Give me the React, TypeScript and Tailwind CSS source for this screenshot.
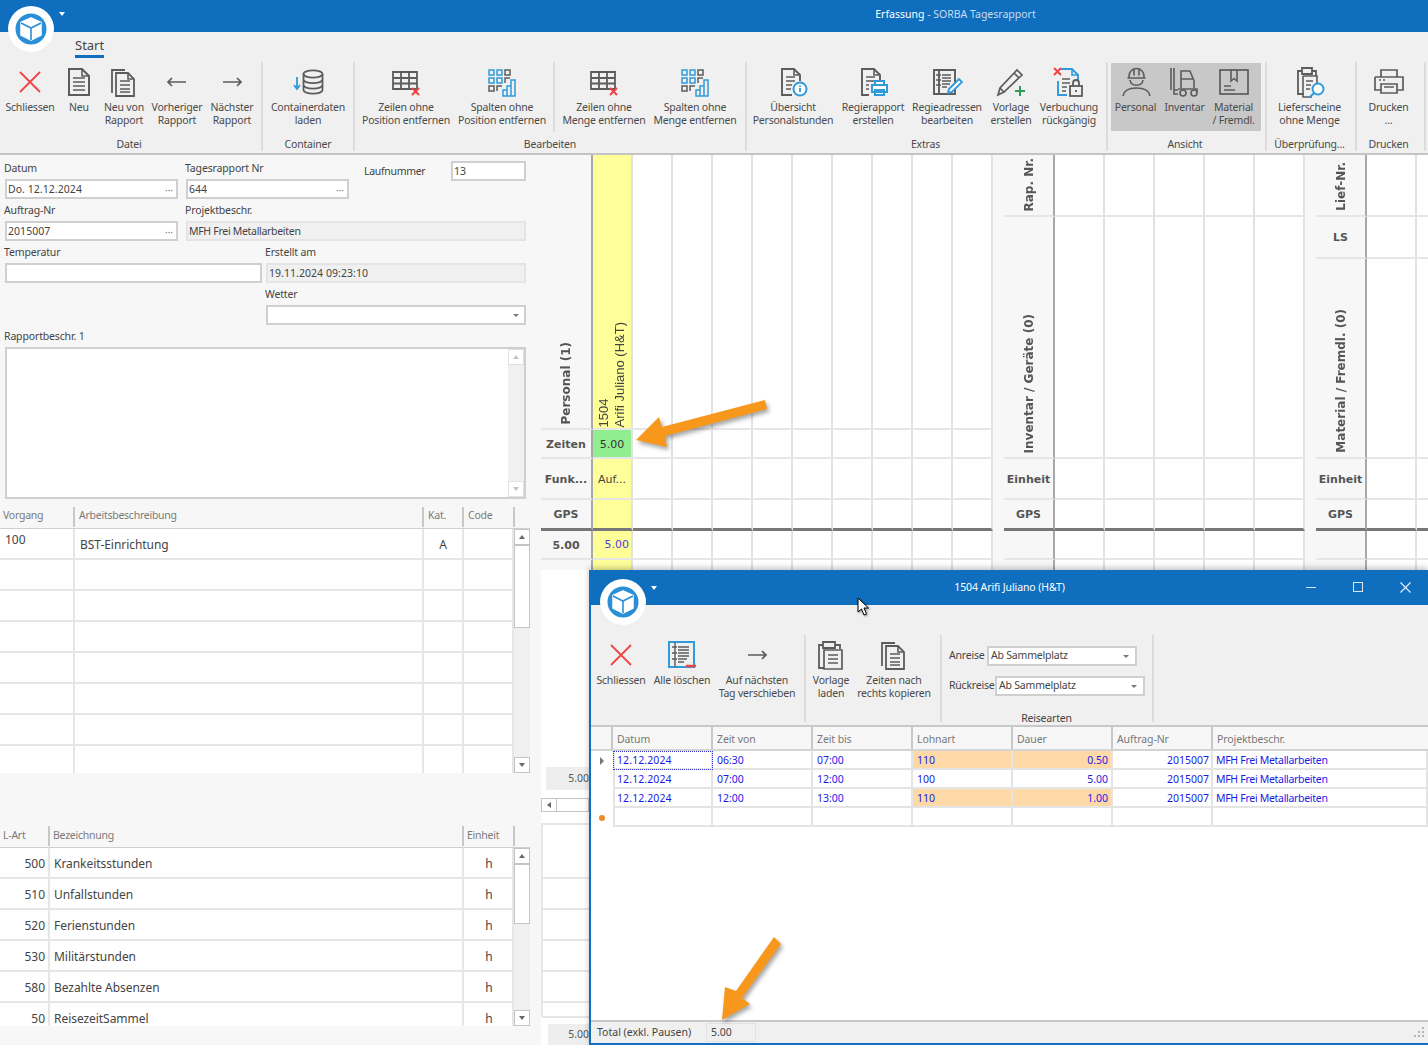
import React from "react";

const S = "#5c5c5c", B = "#2f9bdc", R = "#ee4444";

function Ic({ children }: { children: React.ReactNode }) {
  return (
    <svg width="32" height="32" viewBox="0 0 32 32" fill="none" stroke={S} strokeWidth="1.6">
      {children}
    </svg>
  );
}
const Doc = ({ lines = true }: { lines?: boolean }) => (
  <>
    <path d="M6 3h13l7 7v19H6z" strokeWidth="2" />
    <path d="M19 3v7h7" />
    {lines && <path d="M10 12h12M10 16h12M10 20h12M10 24h12" />}
  </>
);
const XIcon = () => <Ic><path d="M6 6l20 20M26 6L6 26" stroke={R} strokeWidth="1.8" /></Ic>;
const DocIcon = () => <Ic><Doc /></Ic>;
const DocStack = () => (
  <Ic>
    <path d="M4 27V4h13" strokeWidth="1.8" />
    <path d="M8 7h12l6 6v17H8z" strokeWidth="1.8" />
    <path d="M20 7v6h6M12 15h10M12 19h10M12 23h10M12 26h10" />
  </Ic>
);
const ArrowL = () => <Ic><path d="M7 16h18M11 12l-4 4 4 4" strokeWidth="1.7" /></Ic>;
const ArrowR = () => <Ic><path d="M7 16h18M21 12l4 4-4 4" strokeWidth="1.7" /></Ic>;
const Cylinder = () => (
  <Ic>
    <ellipse cx="21" cy="8" rx="9.5" ry="3.6" strokeWidth="1.8" />
    <path d="M11.5 8v16c0 2 4 3.6 9.5 3.6s9.5-1.6 9.5-3.6V8M11.5 13.5c0 2 4 3.6 9.5 3.6s9.5-1.6 9.5-3.6M11.5 19c0 2 4 3.6 9.5 3.6s9.5-1.6 9.5-3.6" strokeWidth="1.8" />
    <path d="M5 11v11M2 19l3 4 3-4" stroke={B} strokeWidth="1.8" />
  </Ic>
);
const TableX = () => (
  <Ic>
    <path d="M3 6h24v17H3zM3 12h24M3 17.500h24M11 6v17M19 6v17" strokeWidth="1.8" />
    <path d="M22 22l7 7M29 22l-7 7" stroke={R} strokeWidth="2" fill="white" />
  </Ic>
);
const ColsBars = () => (
  <Ic>
    <g stroke={B} strokeWidth="1.5">
      <rect x="3" y="4" width="5" height="5" /><rect x="11" y="4" width="5" height="5" />
      <rect x="3" y="12" width="5" height="5" /><rect x="11" y="12" width="5" height="5" />
    </g>
    <g strokeWidth="1.5">
      <rect x="19" y="4" width="5" height="5" /><path d="M19 17v-5h5" />
      <rect x="3" y="20" width="5" height="5" /><path d="M11 25v-5h5" />
    </g>
    <path d="M17 30v-6h4v6zM21 30V20h4v10zM25 30V14h4v16z" stroke={B} strokeWidth="1.5" />
  </Ic>
);
const DocInfo = () => (
  <Ic>
    <path d="M15 29H5V3h12l6 6v6" strokeWidth="1.9" /><path d="M17 3v6h6M9 11h9M9 15h9M9 19h6M9 23h5" />
    <circle cx="23" cy="23" r="6.500" stroke={B} strokeWidth="2" fill="white" />
    <path d="M23 22v4M23 19.500v1.500" stroke={B} strokeWidth="1.8" />
  </Ic>
);
const DocPrint = () => (
  <Ic>
    <path d="M12 29H5V3h12l6 6v5" strokeWidth="1.9" /><path d="M17 3v6h6M9 11h9M9 15h9M9 19h3M9 23h3" />
    <path d="M18 19v-4h9v4M15 19h15v7H15zM18 24h9v5h-9z" stroke={B} strokeWidth="2" fill="white" />
  </Ic>
);
const DocEdit = () => (
  <Ic>
    <path d="M3 4h21v24H3zM8 4v24" strokeWidth="1.9" />
    <path d="M11 9h9M11 12h9M11 15h9M11 18h8M11 21h5M5 9h5M5 14h5M5 19h5" />
    <path d="M17 27l1-4 10-10 3 3-10 10z" stroke={B} strokeWidth="1.9" fill="white" />
  </Ic>
);
const PencilPlus = () => (
  <Ic>
    <path d="M3 29l2-7L22 4l5 5-18 17zM5 22l4 4M19 7l5 5" strokeWidth="1.7" />
    <path d="M25 20v10M20 25h10" stroke="#2f9e55" strokeWidth="2" />
  </Ic>
);
const DocXLock = () => (
  <Ic>
    <path d="M8 3h11l6 6v5M5 15v14h9" stroke={B} strokeWidth="1.9" />
    <path d="M19 3v6h6" stroke={B} />
    <path d="M1 2l7 7M8 2L1 9" stroke={R} strokeWidth="2" />
    <path d="M9 13h8M9 17h8M9 21h5M9 25h4" />
    <rect x="17" y="20" width="12" height="10" strokeWidth="1.8" />
    <path d="M20 20v-3a3 3 0 016 0v3M23 24v2" strokeWidth="1.8" />
  </Ic>
);
const Worker = () => (
  <Ic>
    <path d="M9 10a7.500 7.500 0 0115 0v2H9zM7.500 12h18M14 3.500v6M19 3.500v6M10 14c1 7 12 7 13 0" strokeWidth="1.6" />
    <path d="M3 30c1-6 6-8 13.500-8s12.500 2 13.500 8" strokeWidth="1.6" />
  </Ic>
);
const Forklift = () => (
  <Ic>
    <path d="M5 2v26h4M2 2v22M5 24h4" strokeWidth="1.6" />
    <path d="M12 22V5h9l4 10v7M12 13h13" strokeWidth="1.6" />
    <path d="M9 23h19v3" strokeWidth="1.6" />
    <circle cx="14" cy="27" r="3" strokeWidth="1.6" /><circle cx="25" cy="27" r="3" strokeWidth="1.6" />
  </Ic>
);
const BoxIc = () => (
  <Ic>
    <rect x="2" y="4" width="28" height="24" strokeWidth="1.7" />
    <path d="M13 4v11l3-2.500 3 2.500V4M6 20h7M6 24h11" strokeWidth="1.6" />
  </Ic>
);
const ClipSearch = () => (
  <Ic>
    <path d="M8 5H4v23h6" strokeWidth="1.8" /><path d="M8 2h10v6H8zM18 5h4v5" strokeWidth="1.8" />
    <path d="M9 10h14v10M9 10v21h9M12 15h7M12 19h5M12 23h4" strokeWidth="1.6" />
    <circle cx="24" cy="23" r="5.500" stroke={B} strokeWidth="2" fill="white" />
    <path d="M20 27l-4 4" stroke={B} strokeWidth="2" />
  </Ic>
);
const Printer = () => (
  <Ic>
    <path d="M8 11V4h16v7M2 11h28v13h-6M8 24H2V11M8 18h16v9H8zM11 21h10M6 14h2M10 14h2" strokeWidth="1.7" />
  </Ic>
);
const ClipDoc = () => (
  <Ic>
    <path d="M8 6H4v23h5M8 3h12v6H8zM20 6h5v4" strokeWidth="1.8" />
    <path d="M9 11h18v19H9zM13 16h10M13 20h10M13 24h10" strokeWidth="1.7" />
  </Ic>
);
const ClearAll = () => (
  <Ic>
    <rect x="3" y="3" width="25" height="25" stroke={B} strokeWidth="2" />
    <path d="M9 3v25M12 8h11M12 11h11M12 14h11M12 17h11M12 20h9M12 23h6M6 8h5M6 14h5M6 20h5" strokeWidth="1.4" />
    <path d="M20 27h10" stroke={R} strokeWidth="2.500" />
  </Ic>
);

const Logo = () => (
  <div className="flex h-[46px] w-[46px] items-center justify-center rounded-full bg-white">
    <svg width="32" height="32" viewBox="0 0 32 32">
      <circle cx="16" cy="16" r="15.500" fill="#2b8fd8" />
      <path d="M16 5l10 4.500v12.500l-10 5-10-5V9.500z" fill="white" stroke="white" strokeWidth="1.5" strokeLinejoin="round" />
      <path d="M6 10l10 5 10-5M16 15v12" fill="none" stroke="#2b8fd8" strokeWidth="1.6" />
    </svg>
  </div>
);
const Caret = ({ className }: { className: string }) => (
  <div className={`h-0 w-0 border-x-[3.500px] border-t-[4px] border-x-transparent border-t-white ${className}`} />
);

function Btn({ w, icon, t1, t2 }: { w: string; icon: React.ReactNode; t1: string; t2?: string }) {
  return (
    <div className={`flex shrink-0 flex-col items-center ${w}`}>
      <div className="flex h-[39px] items-center justify-center">{icon}</div>
      <div className="whitespace-nowrap text-center text-[10.5px] leading-[13px] tracking-[-0.2px] text-[#4a4a4a]">
        <div>{t1}</div>
        {t2 && <div>{t2}</div>}
      </div>
    </div>
  );
}
function Group({ w, label, pad, children }: { w: string; label: string; pad?: string; children: React.ReactNode }) {
  return (
    <div className={`flex h-[89px] shrink-0 flex-col border-r-2 border-[#dcdcdc] ${w} ${pad ?? ""}`}>
      <div className="flex h-[76px]">{children}</div>
      <div className="whitespace-nowrap pt-[2px] text-center text-[10.5px] leading-[13px] tracking-[-0.2px] text-[#4a4a4a]">{label}</div>
    </div>
  );
}
const Vsep = () => <div className="mx-[3px] h-[70px] w-[2px] shrink-0 bg-[#dcdcdc]" />;

function Ribbon() {
  return (
    <div className="flex h-[123px] flex-col border-b-2 border-[#c4c4c4] bg-[#f0f0f0]">
      <div className="flex h-[30px] pl-[75px] pt-[5px]">
        <div className="h-[21px] border-b-[3px] border-[#106ebe] text-[13px] leading-[16px] text-[#444]">Start</div>
      </div>
      <div className="flex">
        <Group w="w-[263px]" label="Datei" pad="pl-px pr-[4px]">
          <Btn w="w-[58px]" icon={<XIcon />} t1="Schliessen" />
          <Btn w="w-[40px]" icon={<DocIcon />} t1="Neu" />
          <Btn w="w-[50px]" icon={<DocStack />} t1="Neu von" t2="Rapport" />
          <Btn w="w-[56px]" icon={<ArrowL />} t1="Vorheriger" t2="Rapport" />
          <Btn w="w-[54px]" icon={<ArrowR />} t1="Nächster" t2="Rapport" />
        </Group>
        <Group w="w-[92px]" label="Container">
          <Btn w="w-[90px]" icon={<Cylinder />} t1="Containerdaten" t2="laden" />
        </Group>
        <Group w="w-[392px]" label="Bearbeiten" pad="pl-[3px] pr-[3px]">
          <Btn w="w-[96px]" icon={<TableX />} t1="Zeilen ohne" t2="Position entfernen" />
          <Btn w="w-[96px]" icon={<ColsBars />} t1="Spalten ohne" t2="Position entfernen" />
          <Vsep />
          <Btn w="w-[92px]" icon={<TableX />} t1="Zeilen ohne" t2="Menge entfernen" />
          <Btn w="w-[90px]" icon={<ColsBars />} t1="Spalten ohne" t2="Menge entfernen" />
        </Group>
        <Group w="w-[361px]" label="Extras" pad="pl-px pr-[3px]">
          <Btn w="w-[90px]" icon={<DocInfo />} t1="Übersicht" t2="Personalstunden" />
          <Btn w="w-[70px]" icon={<DocPrint />} t1="Regierapport" t2="erstellen" />
          <Btn w="w-[78px]" icon={<DocEdit />} t1="Regieadressen" t2="bearbeiten" />
          <Btn w="w-[50px]" icon={<PencilPlus />} t1="Vorlage" t2="erstellen" />
          <Btn w="w-[66px]" icon={<DocXLock />} t1="Verbuchung" t2="rückgängig" />
        </Group>
        <Group w="w-[159px]" label="Ansicht" pad="pl-[3px] pr-[6px]">
          <div className="mt-px flex h-[68px] w-[150px] shrink-0 bg-[#c8c8c8]">
            <div className="-mt-px flex">
              <Btn w="w-[49px]" icon={<Worker />} t1="Personal" />
              <Btn w="w-[49px]" icon={<Forklift />} t1="Inventar" />
              <Btn w="w-[49px]" icon={<BoxIc />} t1="Material" t2="/ Fremdl." />
            </div>
          </div>
        </Group>
        <Group w="w-[90px]" label="Überprüfung..." pad="pr-[3px]">
          <Btn w="w-[85px]" icon={<ClipSearch />} t1="Lieferscheine" t2="ohne Menge" />
        </Group>
        <Group w="w-[69px]" label="Drucken" pad="pr-[4px]">
          <Btn w="w-[63px]" icon={<Printer />} t1="Drucken" t2="..." />
        </Group>
      </div>
    </div>
  );
}

const labelCls = "h-[22px] whitespace-nowrap text-[10.5px] leading-[22px] tracking-[-0.15px] text-[#444]";
function Input({ w, value, dots, disabled, combo, h, tight }: { w: string; value?: string; dots?: boolean; disabled?: boolean; combo?: boolean; h?: string; tight?: boolean }) {
  return (
    <div className={`flex items-center border-2 pl-[1px] pr-[3px] pt-px text-[10.5px] text-[#444] ${h ?? "h-[20px]"} ${w} ${disabled ? "border-[#e4e4e4] bg-[#f0f0f0]" : "border-[#cfcfcf] bg-white"}`}>
      <span className={`flex-1 whitespace-nowrap ${tight ? "tracking-[-0.3px]" : "tracking-[0.05px]"}`}>{value}</span>
      {dots && <span className="text-[10px] leading-none text-[#777]">···</span>}
      {combo && <div className="mr-[2px] h-0 w-0 border-x-[3px] border-t-[3px] border-x-transparent border-t-[#777]" />}
    </div>
  );
}

function ScrollBtn({ up, pale }: { up?: boolean; pale?: boolean }) {
  return (
    <div className={`flex h-[16px] w-[16px] shrink-0 items-center justify-center border bg-white ${pale ? "border-[#e2e2e2]" : "border-[#c4c4c4]"}`}>
      <div className={`h-0 w-0 border-x-[3.500px] border-x-transparent ${up ? `border-b-[4px] ${pale ? "border-b-[#c4c4c4]" : "border-b-[#666]"}` : `border-t-[4px] ${pale ? "border-t-[#c4c4c4]" : "border-t-[#666]"}`}`} />
    </div>
  );
}
function VScroll({ thumb, h }: { thumb: string; h: string }) {
  return (
    <div className={`flex w-[16px] shrink-0 flex-col bg-[#f0f0f0] ${h}`}>
      <ScrollBtn up />
      <div className={`w-[16px] border border-[#c4c4c4] bg-white ${thumb}`} />
      <div className="flex-1" />
      <ScrollBtn />
    </div>
  );
}
function HeadCell({ w, pb, children }: { w: string; pb: string; children?: React.ReactNode }) {
  return (
    <div className={`flex h-[20px] shrink-0 items-center overflow-hidden whitespace-nowrap border-r-2 border-[#c8c8c8] pl-[4px] text-[10.5px] tracking-[-0.25px] text-[#7a7a7a] ${w} ${pb}`}>
      {children}
    </div>
  );
}
const rowCell = "flex shrink-0 items-center overflow-hidden whitespace-nowrap border-r-2 border-[#e6e6e6] pt-[2px] text-[12px] tracking-[-0.05px] text-[#444]";

function LeftPanel() {
  const lart: [string, string][] = [["500", "Krankeitsstunden"], ["510", "Unfallstunden"], ["520", "Ferienstunden"], ["530", "Militärstunden"], ["580", "Bezahlte Absenzen"], ["50", "ReisezeitSammel"]];
  return (
    <div className="flex w-[541px] shrink-0 flex-col bg-[#f7f7f7]">
      <div className="flex flex-col pl-[4px] pt-[2px]">
        <div className="flex">
          <div className="w-[181px]">
            <div className={labelCls}>Datum</div>
            <div className="pl-px"><Input w="w-[173px]" value="Do. 12.12.2024" dots /></div>
          </div>
          <div className="w-[179px]">
            <div className={labelCls}>Tagesrapport Nr</div>
            <div className="pl-px"><Input w="w-[163px]" value="644" dots /></div>
          </div>
          <div className="flex h-[22px] w-[87px] items-center pt-[8px] text-[10.5px] tracking-[-0.3px] text-[#444]">Laufnummer</div>
          <div className="pt-[4px]"><Input w="w-[75px]" value="13" /></div>
        </div>
        <div className="flex">
          <div className="w-[181px]">
            <div className={labelCls}>Auftrag-Nr</div>
            <div className="pl-px"><Input w="w-[173px]" value="2015007" dots /></div>
          </div>
          <div>
            <div className={labelCls}>Projektbeschr.</div>
            <div className="pl-px"><Input w="w-[340px]" value="MFH Frei Metallarbeiten" disabled tight /></div>
          </div>
        </div>
        <div className="flex">
          <div className="w-[261px]">
            <div className={labelCls}>Temperatur</div>
            <div className="pl-px"><Input w="w-[257px]" /></div>
          </div>
          <div>
            <div className={labelCls}>Erstellt am</div>
            <div className="pl-px"><Input w="w-[260px]" value="19.11.2024 09:23:10" disabled /></div>
          </div>
        </div>
        <div className="flex">
          <div className="w-[261px]" />
          <div>
            <div className={labelCls}>Wetter</div>
            <div className="pl-px"><Input w="w-[260px]" combo /></div>
          </div>
        </div>
        <div className={labelCls}>Rapportbeschr. 1</div>
        <div className="ml-px flex h-[152px] w-[521px] justify-end border-2 border-[#cfcfcf] bg-white">
          <div className="flex w-[16px] flex-col justify-between bg-[#f0f0f0]">
            <ScrollBtn up pale />
            <ScrollBtn pale />
          </div>
        </div>
      </div>

      <div className="mt-[6px] flex h-[23px] items-center">
        <HeadCell pb="pb-[2px]" w="w-[75px]"><span className="-ml-px">Vorgang</span></HeadCell>
        <HeadCell pb="pb-[2px]" w="w-[349px]">Arbeitsbeschreibung</HeadCell>
        <HeadCell pb="pb-[2px]" w="w-[40px]">Kat.</HeadCell>
        <HeadCell pb="pb-[2px]" w="w-[51px]">Code</HeadCell>
      </div>
      <div className="flex h-[245px] w-[530px] overflow-hidden border-t border-[#cfcfcf]">
        <div className="w-[514px] bg-white">
          {[0, 1, 2, 3, 4, 5, 6, 7].map((i) => (
            <div key={i} className="flex h-[31px] border-b-2 border-[#e6e6e6]">
              <div className={`${rowCell} w-[75px] items-start pl-[5px]`}>{i === 0 ? "100" : ""}</div>
              <div className={`${rowCell} w-[349px] pl-[5px]`}>{i === 0 ? "BST-Einrichtung" : ""}</div>
              <div className={`${rowCell} w-[40px] justify-center`}>{i === 0 ? "A" : ""}</div>
              <div className={`${rowCell} w-[50px]`} />
            </div>
          ))}
        </div>
        <VScroll h="h-[244px]" thumb="h-[83px]" />
      </div>

      <div className="mt-[52px] flex h-[22px] items-center">
        <HeadCell pb="pb-0" w="w-[50px]"><span className="-ml-px">L-Art</span></HeadCell>
        <HeadCell pb="pb-0" w="w-[414px]"><span className="-ml-px">Bezeichnung</span></HeadCell>
        <HeadCell pb="pb-0" w="w-[51px]"><span className="-ml-px">Einheit</span></HeadCell>
      </div>
      <div className="flex h-[179px] w-[530px] overflow-hidden border-t border-[#cfcfcf]">
        <div className="w-[514px] bg-white">
          {lart.map(([n, t]) => (
            <div key={n} className="flex h-[31px] border-b-2 border-[#e6e6e6]">
              <div className={`${rowCell} w-[50px] justify-end pr-[3px]`}>{n}</div>
              <div className={`${rowCell} w-[414px] pl-[4px]`}>{t}</div>
              <div className={`${rowCell} w-[50px] justify-center border-r-0 pl-[2px]`}>h</div>
            </div>
          ))}
        </div>
        <VScroll h="h-[178px]" thumb="h-[60px]" />
      </div>
    </div>
  );
}

const boldTxt = "[font-family:'DejaVu_Sans',sans-serif] text-[11px] font-bold text-[#555]";
const VText = ({ children }: { children: React.ReactNode }) => (
  <span className="rotate-180 whitespace-nowrap [writing-mode:vertical-rl] [font-family:'DejaVu_Sans',sans-serif] text-[12px] font-bold text-[#555]">{children}</span>
);

type GridRow = { h: string; label?: React.ReactNode; line?: string; vert?: boolean; first?: React.ReactNode; firstCls?: string };
const thinLine = "border-b-2 border-b-[#e6e6e6]";

function Section({ gutter, labelW, colW, count, rows }: { gutter?: boolean; labelW: string; colW: string; count: number; rows: GridRow[] }) {
  return (
    <div className="flex shrink-0 flex-col">
      {rows.map((r, i) => (
        <div key={i} className={`flex ${r.h}`}>
          {gutter && <div className="w-[11px] shrink-0 bg-[#f7f7f7]" />}
          <div className={`flex shrink-0 justify-center border-r-2 bg-[#f7f7f7] border-r-[#a8a8a8] ${r.vert ? "items-end pb-[4px]" : "items-center pt-[3px]"} ${labelW} ${r.line ?? thinLine}`}>
            {r.label}
          </div>
          {Array.from({ length: count }).map((_, c) => (
            <div
              key={c}
              className={`flex shrink-0 border-r-2 border-r-[#e2e2e2] ${colW} ${r.line ?? thinLine} ${c === 0 && r.firstCls ? r.firstCls : "bg-white"}`}
            >
              {c === 0 ? r.first : null}
            </div>
          ))}
        </div>
      ))}
    </div>
  );
}

function GridArea() {
  const thick = "border-b-[3px] border-b-[#777]";
  const none = "border-b-0";
  const total = <span className={boldTxt}>5.00</span>;
  const plain = "[font-family:'DejaVu_Sans',sans-serif] text-[11px]";
  return (
    <div className="flex min-w-0 flex-1 flex-col overflow-hidden bg-white">
      <div className="flex h-[415px] overflow-hidden">
        <Section
          labelW="w-[52px]"
          colW="w-[40px]"
          count={10}
          rows={[
            {
              h: "h-[275px]", vert: true, label: <VText>Personal (1)</VText>, firstCls: "bg-[#ffff99] items-end pb-[1px] pl-[3px]",
              first: <span className="rotate-180 whitespace-nowrap text-left text-[13px] leading-[16px] text-[#444] [writing-mode:vertical-rl] [font-family:'Liberation_Sans',sans-serif]">1504<br />Arifi Juliano (H&amp;T)</span>,
            },
            { h: "h-[29px]", label: <span className={boldTxt}>Zeiten</span>, firstCls: "bg-[#90ee90] items-center justify-center pt-[3px]", first: <span className={`${plain} text-[#333]`}>5.00</span> },
            { h: "h-[41px]", label: <span className={boldTxt}>Funk...</span>, firstCls: "bg-[#ffff99] items-center justify-center pt-[3px]", first: <span className={`${plain} text-[#444]`}>Auf...</span> },
            { h: "h-[31px]", line: thick, label: <span className={boldTxt}>GPS</span>, firstCls: "bg-[#ffff99]" },
            { h: "h-[29px]", label: total, firstCls: "bg-[#ffff99] items-center justify-end pr-[2px] pt-[2px]", first: <span className={`${plain} text-[#4a3fd8]`}>5.00</span> },
            { h: "h-[10px]", line: none, firstCls: "bg-[#ffff99]" },
          ]}
        />
        <Section
          gutter
          labelW="w-[51px]"
          colW="w-[50px]"
          count={5}
          rows={[
            { h: "h-[62px]", vert: true, label: <VText>Rap. Nr.</VText> },
            { h: "h-[242px]", vert: true, label: <VText>Inventar / Geräte (0)</VText> },
            { h: "h-[41px]", label: <span className={boldTxt}>Einheit</span> },
            { h: "h-[31px]", line: thick, label: <span className={boldTxt}>GPS</span> },
            { h: "h-[29px]" },
            { h: "h-[10px]", line: none },
          ]}
        />
        <Section
          gutter
          labelW="w-[51px]"
          colW="w-[50px]"
          count={2}
          rows={[
            { h: "h-[62px]", vert: true, label: <VText>Lief-Nr.</VText> },
            { h: "h-[42px]", label: <span className={boldTxt}>LS</span> },
            { h: "h-[200px]", vert: true, label: <VText>Material / Fremdl. (0)</VText> },
            { h: "h-[41px]", label: <span className={boldTxt}>Einheit</span> },
            { h: "h-[31px]", line: thick, label: <span className={boldTxt}>GPS</span> },
            { h: "h-[29px]" },
            { h: "h-[10px]", line: none },
          ]}
        />
      </div>
      <div className="flex w-[48px] flex-1 flex-col overflow-hidden">
        <div className="h-[197px] shrink-0 bg-white" />
        <div className="ml-[5px] flex h-[23px] shrink-0 items-center justify-end bg-[#eeeeee] text-[10.5px] text-[#555]">5.00</div>
        <div className="mt-[8px] flex h-[14px] shrink-0 border border-[#c4c4c4] bg-white">
          <div className="flex w-[15px] items-center justify-center border-r border-[#c4c4c4]">
            <div className="h-0 w-0 border-y-[3.500px] border-r-[4px] border-y-transparent border-r-[#666]" />
          </div>
        </div>
        <div className="mt-[11px] h-[194px] shrink-0 border-l-2 border-t-2 border-[#e6e6e6] bg-white">
          <div className="h-[54px] border-b-2 border-[#e6e6e6]" />
          <div className="h-[31px] border-b-2 border-[#e6e6e6]" />
          <div className="h-[31px] border-b-2 border-[#e6e6e6]" />
          <div className="h-[31px] border-b-2 border-[#e6e6e6]" />
          <div className="h-[31px] border-b-2 border-[#e6e6e6]" />
          <div className="h-[15px] border-b-2 border-[#e6e6e6]" />
        </div>
        <div className="ml-[7px] mt-[7px] flex h-[21px] shrink-0 items-center justify-end bg-[#eeeeee] text-[10.5px] text-[#555]">5.00</div>
      </div>
    </div>
  );
}

function Combo({ w, value }: { w: string; value: string }) {
  return (
    <div className={`flex h-[20px] items-center border-2 border-[#cfcfcf] bg-white pl-[2px] pr-[6px] text-[10.5px] tracking-[-0.2px] text-[#444] ${w}`}>
      <span className="flex-1 whitespace-nowrap">{value}</span>
      <div className="h-0 w-0 border-x-[3px] border-t-[3px] border-x-transparent border-t-[#777]" />
    </div>
  );
}

const winCols = "grid grid-cols-[22px_100px_100px_100px_100px_100px_100px_1fr]";
const cellBase = "flex items-center overflow-hidden whitespace-nowrap border-b-2 border-r-2 border-[#e4e4e4] pt-[2px] text-[10.5px] text-[#1a1ae6]";

function Window() {
  const data = [
    { d: "12.12.2024", a: "06:30", b: "07:00", l: "110", m: "0.50", hi: true },
    { d: "12.12.2024", a: "07:00", b: "12:00", l: "100", m: "5.00", hi: false },
    { d: "12.12.2024", a: "12:00", b: "13:00", l: "110", m: "1.00", hi: true },
  ];
  return (
    <div className="absolute left-[589px] top-[570px] flex h-[475px] w-[839px] flex-col border-b-2 border-l-2 border-[#106ebe] bg-white shadow-[0_-2px_6px_rgba(0,0,0,0.25)]">
      <div className="relative flex h-[35px] shrink-0 items-center justify-center bg-[#106ebe] text-[10.5px] tracking-[-0.1px] text-white">
        <span>1504 Arifi Juliano (H&amp;T)</span>
        <div className="absolute right-[112px] top-[17px] h-px w-[10px] bg-[#dce9f5]" />
        <div className="absolute right-[65px] top-[12px] h-[10px] w-[10px] border border-[#dce9f5]" />
        <svg className="absolute right-[17px] top-[12px]" width="11" height="11" viewBox="0 0 11 11">
          <path d="M0.500 0.500l10 10M10.500 0.500l-10 10" stroke="#eaf2fa" strokeWidth="1.1" />
        </svg>
      </div>
      <div className="flex h-[122px] shrink-0 border-b-2 border-[#c8c8c8] bg-[#f0f0f0] pt-[30px]">
        <Btn w="w-[60px]" icon={<XIcon />} t1="Schliessen" />
        <Btn w="w-[62px]" icon={<ClearAll />} t1="Alle löschen" />
        <Btn w="w-[88px]" icon={<ArrowR />} t1="Auf nächsten" t2="Tag verschieben" />
        <div className="ml-[3px] mr-[2px] h-[87px] w-[2px] bg-[#dcdcdc]" />
        <Btn w="w-[46px]" icon={<ClipDoc />} t1="Vorlage" t2="laden" />
        <Btn w="w-[80px]" icon={<DocStack />} t1="Zeiten nach" t2="rechts kopieren" />
        <div className="ml-[6px] h-[87px] w-[2px] bg-[#dcdcdc]" />
        <div className="flex h-[87px] w-[210px] flex-col pl-[7px] pt-[11px] text-[10.5px] tracking-[-0.2px] text-[#444]">
          <div className="flex h-[20px] items-center">
            <span className="w-[38px]">Anreise</span>
            <Combo w="w-[150px]" value="Ab Sammelplatz" />
          </div>
          <div className="mt-[10px] flex h-[20px] items-center">
            <span className="w-[46px]">Rückreise</span>
            <Combo w="w-[150px]" value="Ab Sammelplatz" />
          </div>
          <div className="mt-[16px] pr-[8px] text-center leading-[13px]">Reisearten</div>
        </div>
        <div className="h-[87px] w-[2px] bg-[#dcdcdc]" />
      </div>
      <div className={`${winCols} h-[24px] shrink-0 border-b-2 border-[#d4d4d4] bg-[#f7f7f7]`}>
        <div className="border-r-2 border-[#c8c8c8]" />
        {["Datum", "Zeit von", "Zeit bis", "Lohnart", "Dauer", "Auftrag-Nr"].map((h) => (
          <div key={h} className="flex items-center border-r-2 border-[#c8c8c8] pl-[4px] pt-[3px] text-[10.5px] tracking-[-0.1px] text-[#777]">{h}</div>
        ))}
        <div className="flex items-center pl-[4px] pt-[3px] text-[10.5px] tracking-[-0.1px] text-[#777]">Projektbeschr.</div>
      </div>
      {data.map((r, i) => (
        <div key={i} className={`${winCols} h-[19px] shrink-0`}>
          <div className="flex items-center justify-center">
            {i === 0 && <div className="h-0 w-0 border-y-[4px] border-l-[4px] border-y-transparent border-l-[#777]" />}
          </div>
          <div className={`${cellBase} border-l-2 pl-[2px] tracking-[0.1px] ${i === 0 ? "outline-1 -outline-offset-1 outline-dotted outline-[#3333cc]" : ""}`}>{r.d}</div>
          <div className={`${cellBase} pl-[4px]`}>{r.a}</div>
          <div className={`${cellBase} pl-[4px]`}>{r.b}</div>
          <div className={`${cellBase} pl-[4px] ${r.hi ? "bg-[#fdd9a8]" : ""}`}>{r.l}</div>
          <div className={`${cellBase} justify-end pr-[3px] ${r.hi ? "bg-[#fdd9a8]" : ""}`}>{r.m}</div>
          <div className={`${cellBase} justify-end pr-[2px]`}>2015007</div>
          <div className={`${cellBase} pl-[3px] tracking-[-0.3px]`}>MFH Frei Metallarbeiten</div>
        </div>
      ))}
      <div className={`${winCols} h-[19px] shrink-0`}>
        <div className="flex items-center justify-center">
          <div className="h-[6px] w-[6px] rounded-full bg-[#f08a24]" />
        </div>
        {[0, 1, 2, 3, 4, 5, 6].map((c) => <div key={c} className={`${cellBase} ${c === 0 ? "border-l-2" : ""}`} />)}
      </div>
      <div className="flex-1" />
      <div className="flex h-[23px] shrink-0 items-center justify-between border-t-2 border-[#c8c8c8] bg-[#f0f0f0] pl-[6px] pr-[3px] text-[10.5px] text-[#444]">
        <div className="flex items-center">
          <span className="w-[109px]">Total (exkl. Pausen)</span>
          <div className="flex h-[19px] w-[50px] items-center border border-[#e2e2e2] pl-[4px]">5.00</div>
        </div>
        <svg width="11" height="11" viewBox="0 0 11 11" fill="#b5b5b5">
          <rect x="8" y="0" width="2" height="2" /><rect x="4" y="4" width="2" height="2" /><rect x="8" y="4" width="2" height="2" />
          <rect x="0" y="8" width="2" height="2" /><rect x="4" y="8" width="2" height="2" /><rect x="8" y="8" width="2" height="2" />
        </svg>
      </div>
      <div className="absolute left-[9px] top-[9px]"><Logo /></div>
      <Caret className="absolute left-[60px] top-[16px]" />
    </div>
  );
}

export default function App() {
  return (
    <div className="relative h-[1045px] w-[1428px] overflow-hidden bg-[#f7f7f7] [font-family:'Noto_Sans',sans-serif]">
      <div className="flex h-[32px] items-center justify-center bg-[#106ebe] pb-[2px] pl-[483px] text-[10.5px]">
        <span className="text-white">Erfassung</span>
        <span className="text-[#c9dcf0]">&nbsp;- SORBA Tagesrapport</span>
      </div>
      <Ribbon />
      <div className="flex h-[890px]">
        <LeftPanel />
        <GridArea />
      </div>
      <div className="absolute left-[8px] top-[6px]"><Logo /></div>
      <Caret className="absolute left-[59px] top-[12px]" />
      <Window />
      <svg className="absolute left-[630px] top-[395px] drop-shadow-[2px_3px_2px_rgba(0,0,0,0.35)]" width="145" height="60" viewBox="630 395 145 60">
        <path d="M636 440L659 417L662 427L765 400L767 409L665 436L667 447Z" fill="#f7981d" />
      </svg>
      <svg className="absolute left-[715px] top-[930px] drop-shadow-[2px_3px_2px_rgba(0,0,0,0.35)]" width="75" height="95" viewBox="715 930 75 95">
        <path d="M722 1020L725 987L736 991L774 937L781 944L742 998L750 1004Z" fill="#f7981d" />
      </svg>
      <svg className="absolute left-[857px] top-[597px] drop-shadow-[1px_1px_1px_rgba(0,0,0,0.4)]" width="14" height="20" viewBox="0 0 14 20">
        <path d="M1 1v14l3.500-3 2.500 6 2.500-1-2.500-6h4.500z" fill="white" stroke="black" strokeWidth="1" />
      </svg>
    </div>
  );
}
